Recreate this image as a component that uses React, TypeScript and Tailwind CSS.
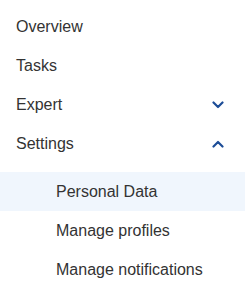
import React from "react";

const Chevron = ({ up }: { up?: boolean }) => (
  <svg width="12" height="8" viewBox="0 0 12 8" className="block">
    <path
      d={up ? "M1.5 6.5 L6 2 L10.5 6.5" : "M1.5 1.5 L6 6 L10.5 1.5"}
      fill="none"
      stroke="#1d4d97"
      strokeWidth="2.2"
      strokeLinecap="round"
      strokeLinejoin="round"
    />
  </svg>
);

export default function App() {
  const top = [
    { label: "Overview" },
    { label: "Tasks" },
    { label: "Expert", chevron: "down" },
    { label: "Settings", chevron: "up" },
  ];
  const sub = [
    { label: "Personal Data", active: true },
    { label: "Manage profiles" },
    { label: "Manage notifications" },
  ];
  return (
    <div
      className="w-[245px] h-[299px] bg-white pt-[7px] text-[16px] text-[#333333]"
      style={{ fontFamily: '"Liberation Sans", Arial, sans-serif' }}
    >
      {top.map((t) => (
        <div key={t.label} className="h-[39px] flex items-center justify-between pl-4 pr-[21px]">
          <span>{t.label}</span>
          {t.chevron && <Chevron up={t.chevron === "up"} />}
        </div>
      ))}
      <div className="mt-[9px]">
        {sub.map((s) => (
          <div
            key={s.label}
            className={`h-[39px] flex items-center pl-[56px] ${s.active ? "bg-[#f0f6fd]" : ""}`}
          >
            {s.label}
          </div>
        ))}
      </div>
    </div>
  );
}
